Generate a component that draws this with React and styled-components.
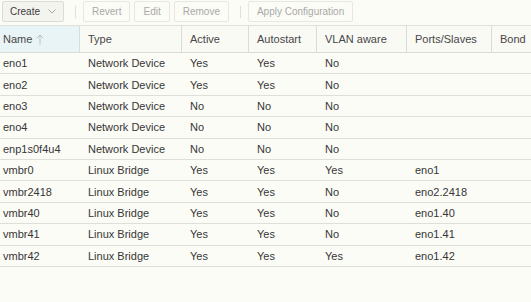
import React from "react";
import styled, { createGlobalStyle } from "styled-components";

const Global = createGlobalStyle`
  html, body { margin: 0; padding: 0; background: #fcfcf6; }
  body { font-family: "Liberation Sans", Arial, sans-serif; color: #333; }
`;

const Page = styled.div`
  width: 531px;
  height: 302px;
  overflow: hidden;
  background: #fcfcf6;
`;

const Toolbar = styled.div`
  display: flex;
  align-items: center;
  height: 25px;
  padding-left: 2px;
  box-sizing: border-box;
`;

const Button = styled.div`
  display: flex;
  align-items: center;
  gap: 8px;
  height: 21px;
  box-sizing: border-box;
  padding: 0 ${(p) => (p.$menu ? "7px" : "8px")};
  margin-top: -2px;
  font-size: 10px;
  border: 1px solid ${(p) => (p.$disabled ? "#e8e8e2" : "#dcdcd6")};
  background: ${(p) => (p.$disabled ? "#fcfcf6" : "#f4f4ef")};
  color: ${(p) => (p.$disabled ? "#a9a9a9" : "#3a3a3a")};
  border-radius: 2px;
  margin-right: ${(p) => p.$mr || 4}px;
`;

const Sep = styled.div`
  width: 1px;
  height: 12px;
  background: #e0e0da;
  margin: -2px 7px 0 7px;
`;

const Grid = styled.div`
  display: grid;
  grid-template-columns: 80px 102px 67px 68px 90px 85px 1fr;
`;

const HeaderRow = styled(Grid)`
  height: 28px;
  box-sizing: border-box;
  border-top: 1px solid #e2e2dc;
  border-bottom: 1px solid #dcdcd6;
  background: #fafaf5;
`;

const HeadCell = styled.div`
  display: flex;
  align-items: center;
  gap: 4px;
  padding-left: ${(p) => (p.$first ? "3px" : "8px")};
  font-size: 11px;
  color: #474747;
  border-right: 1px solid #dcdcd6;
  background: ${(p) => (p.$sorted ? "#e8f4f6" : "transparent")};
  white-space: nowrap;
  &:last-child { border-right: none; }
`;

const Row = styled(Grid)`
  height: 21.4px;
  box-sizing: border-box;
  border-bottom: 1px solid #dfdfd9;
`;

const Cell = styled.div`
  display: flex;
  align-items: center;
  padding-left: ${(p) => (p.$first ? "3px" : "8px")};
  font-size: 11px;
  color: #363636;
  white-space: nowrap;
  overflow: hidden;
`;

const rows = [
  ["eno1", "Network Device", "Yes", "Yes", "No", "", ""],
  ["eno2", "Network Device", "Yes", "Yes", "No", "", ""],
  ["eno3", "Network Device", "No", "No", "No", "", ""],
  ["eno4", "Network Device", "No", "No", "No", "", ""],
  ["enp1s0f4u4", "Network Device", "No", "No", "No", "", ""],
  ["vmbr0", "Linux Bridge", "Yes", "Yes", "Yes", "eno1", ""],
  ["vmbr2418", "Linux Bridge", "Yes", "Yes", "No", "eno2.2418", ""],
  ["vmbr40", "Linux Bridge", "Yes", "Yes", "No", "eno1.40", ""],
  ["vmbr41", "Linux Bridge", "Yes", "Yes", "No", "eno1.41", ""],
  ["vmbr42", "Linux Bridge", "Yes", "Yes", "Yes", "eno1.42", ""],
];

const headers = ["Type", "Active", "Autostart", "VLAN aware", "Ports/Slaves", "Bond"];

const Chevron = () => (
  <svg width="8" height="5" viewBox="0 0 8 5" fill="none">
    <path d="M0.5 0.5 L4 4 L7.5 0.5" stroke="#a8a8a8" strokeWidth="1" />
  </svg>
);

const SortArrow = () => (
  <svg width="8" height="11" viewBox="0 0 8 11" fill="none">
    <path d="M4 1 V10.5 M0.8 4.2 L4 1 L7.2 4.2" stroke="#b3c3ca" strokeWidth="1" />
  </svg>
);

export default function App() {
  return (
    <Page>
      <Global />
      <Toolbar>
        <Button $menu $mr={0}>
          Create <Chevron />
        </Button>
        <Sep />
        <Button $disabled>Revert</Button>
        <Button $disabled>Edit</Button>
        <Button $disabled $mr={0}>Remove</Button>
        <Sep />
        <Button $disabled>Apply Configuration</Button>
      </Toolbar>
      <HeaderRow>
        <HeadCell $first $sorted>
          Name <SortArrow />
        </HeadCell>
        {headers.map((h) => (
          <HeadCell key={h}>{h}</HeadCell>
        ))}
      </HeaderRow>
      {rows.map((r) => (
        <Row key={r[0]}>
          {r.map((c, i) => (
            <Cell key={i} $first={i === 0}>
              {c}
            </Cell>
          ))}
        </Row>
      ))}
    </Page>
  );
}
